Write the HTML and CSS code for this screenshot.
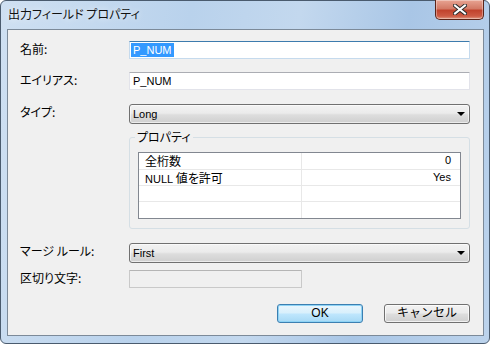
FILE: index.html
```html
<!DOCTYPE html>
<html lang="ja">
<head>
  <meta charset="UTF-8">
  <title>出力フィールド プロパティ</title>
  <link rel="stylesheet" href="styles.css">
</head>
<body>

  <div class="window">
    <div class="titlebar">
      <span class="title">出力フィールド プロパティ</span>
      <div class="close">
        <svg width="14" height="11" viewBox="0 0 14 11">
          <path d="M2 1.5 L12 9.5 M12 1.5 L2 9.5" stroke="#2b2b2b" stroke-width="4" stroke-linecap="square"/>
          <path d="M2 1.5 L12 9.5 M12 1.5 L2 9.5" stroke="#ffffff" stroke-width="2" stroke-linecap="square"/>
        </svg>
      </div>
    </div>

    <div class="client">
      <div class="row">
        <label>名前:</label>
        <div class="textbox focused"><span class="selected">P_NUM</span></div>
      </div>

      <div class="row gap-alias">
        <label>エイリアス:</label>
        <div class="textbox">P_NUM</div>
      </div>

      <div class="row gap-type">
        <label>タイプ:</label>
        <div class="combo">Long<span class="arrow"></span></div>
      </div>

      <fieldset class="groupbox">
        <legend>プロパティ</legend>
        <div class="grid">
          <div class="grid-row"><div class="cell jp">全桁数</div><div class="cell value">0</div></div>
          <div class="grid-row"><div class="cell">NULL <span class="jp">値を許可</span></div><div class="cell value">Yes</div></div>
          <div class="grid-row"><div class="cell"></div><div class="cell value"></div></div>
          <div class="grid-row"><div class="cell"></div><div class="cell value"></div></div>
        </div>
      </fieldset>

      <div class="row gap-merge">
        <label>マージ ルール:</label>
        <div class="combo">First<span class="arrow"></span></div>
      </div>

      <div class="row gap-delim">
        <label>区切り文字:</label>
        <div class="textbox disabled short"></div>
      </div>

      <div class="buttons">
        <button type="button" class="btn default">OK</button>
        <button type="button" class="btn jp">キャンセル</button>
      </div>
    </div>
  </div>

</body>
</html>
```

FILE: styles.css
```css
body {
  margin: 0;
  background-color: #ffffff;
  font-family: "Liberation Sans", "Noto Sans CJK JP", sans-serif;
  font-size: 11px;
  color: #000;
  font-feature-settings: "palt";
}
.jp {
  font-family: "Noto Sans CJK JP", sans-serif;
  font-size: 12px;
}
.window {
  box-sizing: border-box;
  width: 490px;
  height: 344px;
  padding: 0 5px 7px 6px;
  border: 1px solid #4a5b6e;
  border-radius: 6px;
  background: linear-gradient(100deg, #cfe0f2 0%, #b9d2ec 35%, #c3d8ee 55%, #a9c6e6 75%, #bcd3ec 100%);
}
.titlebar {
  display: flex;
  justify-content: space-between;
  height: 28px;
}
.title {
  margin-left: 1px;
  padding-top: 6px;
  line-height: 14px;
  font-family: "Noto Sans CJK JP", sans-serif;
  font-size: 12px;
  color: #111;
  text-shadow: 0 0 6px rgba(255,255,255,0.9);
}
.close {
  box-sizing: border-box;
  width: 49px;
  height: 20px;
  margin-top: -1px;
  display: flex;
  align-items: center;
  justify-content: center;
  border: 1px solid #5b2418;
  border-top: none;
  border-radius: 0 0 5px 5px;
  background: linear-gradient(#e8a493 0%, #d37a66 45%, #c1432d 55%, #cd5b44 85%, #e09a84 100%);
  box-shadow: inset 0 0 0 1px rgba(255,255,255,0.35);
}
.client {
  box-sizing: border-box;
  width: 477px;
  height: 307px;
  padding: 11px 13px 0 12px;
  border: 1px solid #7c8a99;
  background-color: #f0f0f0;
}
.row {
  display: flex;
  align-items: flex-start;
}
.row label {
  width: 109px;
  flex: none;
  line-height: 14px;
  padding-top: 1px;
  font-family: "Noto Sans CJK JP", sans-serif;
  font-size: 12px;
}
.gap-alias { margin-top: 13px; }
.gap-type { margin-top: 14px; }
.gap-merge { margin-top: 14px; }
.gap-delim { margin-top: 7px; }

.textbox {
  box-sizing: border-box;
  width: 341px;
  height: 18px;
  padding: 1px 3px 0 3px;
  line-height: 15px;
  background-color: #fff;
  border: 1px solid #e2e3ea;
  border-top-color: #abadb3;
  border-radius: 1px;
}
.textbox.focused {
  padding-left: 1px;
  border-color: #c5daed;
  border-top-color: #3d7bad;
}
.textbox .selected {
  display: inline-block;
  padding: 0 2px;
  line-height: 14px;
  background-color: #3399ff;
  color: #fff;
}
.textbox.disabled {
  background-color: #f0f0f0;
  border-color: #c9c9c9;
  border-top-color: #b5b5b5;
}
.textbox.short {
  width: 173px;
}
.combo {
  box-sizing: border-box;
  position: relative;
  width: 341px;
  height: 20px;
  padding: 0 3px;
  line-height: 18px;
  border: 1px solid #707070;
  border-radius: 3px;
  background: linear-gradient(#f2f2f2 0%, #ebebeb 45%, #dddddd 55%, #cfcfcf 100%);
  box-shadow: inset 0 0 0 1px rgba(255,255,255,0.6);
}
.combo .arrow {
  position: absolute;
  right: 4px;
  top: 7px;
  width: 0;
  height: 0;
  border-left: 4px solid transparent;
  border-right: 4px solid transparent;
  border-top: 4px solid #000;
}
.groupbox {
  margin: 6px 0 0 109px;
  padding: 0 8px 9px;
  min-width: 0;
  border: 1px solid #d5dfe5;
  border-radius: 3px;
}
.groupbox legend {
  margin-left: -3px;
  padding: 0 2px;
  line-height: 14px;
  font-family: "Noto Sans CJK JP", sans-serif;
  font-size: 12px;
}
.grid {
  margin-top: 8px;
  border: 1px solid #828790;
  background-color: #fff;
}
.grid-row {
  box-sizing: border-box;
  display: flex;
  height: 16px;
  border-bottom: 1px solid #e8e8e8;
}
.grid-row:first-child {
  height: 17px;
}
.grid-row:last-child {
  border-bottom: none;
}
.cell {
  box-sizing: border-box;
  width: 163px;
  padding-left: 6px;
  line-height: 15px;
  white-space: nowrap;
  border-right: 1px solid #e8e8e8;
}
.cell.value {
  flex: 1;
  padding-right: 9px;
  text-align: right;
  border-right: none;
}
.buttons {
  display: flex;
  justify-content: flex-end;
  gap: 21px;
  margin-top: 16px;
}
.btn {
  box-sizing: border-box;
  width: 86px;
  height: 19px;
  padding: 0;
  font-family: "Liberation Sans", "Noto Sans CJK JP", sans-serif;
  font-size: 12px;
  line-height: 15px;
  color: #000;
  border: 1px solid #707070;
  border-radius: 3px;
  background: linear-gradient(#f2f2f2 0%, #ebebeb 45%, #dddddd 55%, #cfcfcf 100%);
  box-shadow: inset 0 0 0 1px rgba(255,255,255,0.7);
}
.btn.default {
  border-color: #3c7fb1;
  background: linear-gradient(#eaf6fd 0%, #d9f0fc 45%, #bee6fd 55%, #a7d9f5 100%);
  box-shadow: inset 0 0 0 1px #8ed3f5;
}
```
